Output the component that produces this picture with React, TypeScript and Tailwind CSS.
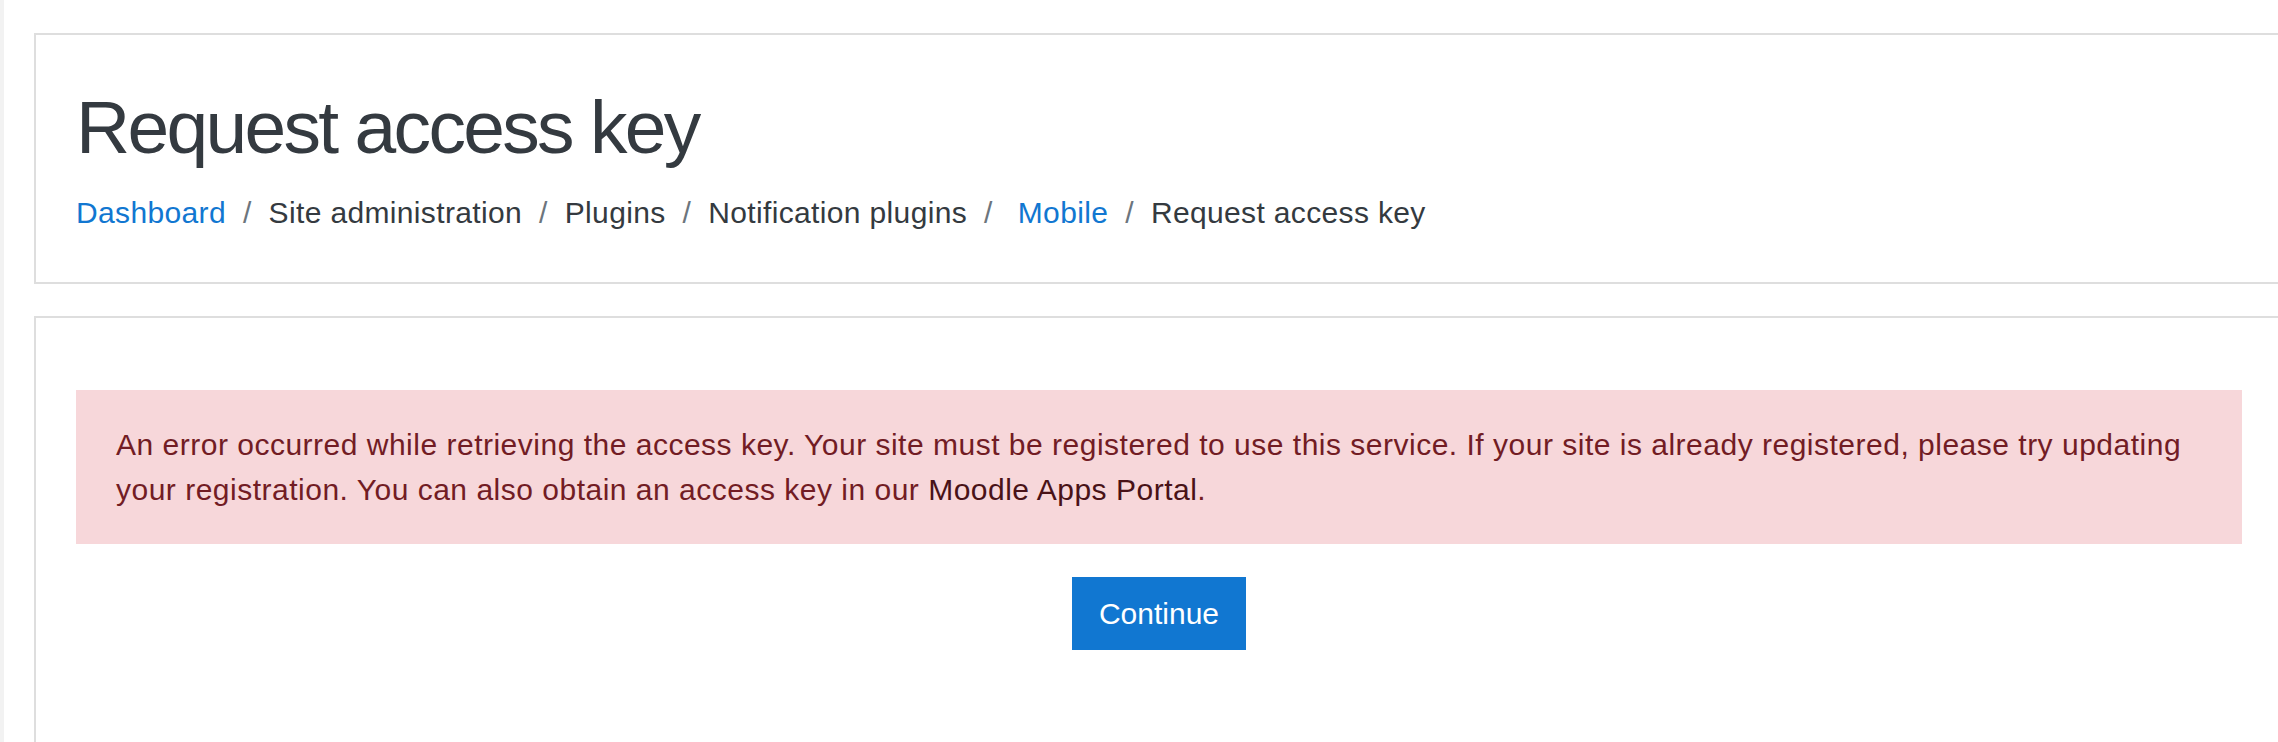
const crumbs = [
  { label: "Dashboard", link: true },
  { label: "Site administration" },
  { label: "Plugins" },
  { label: "Notification plugins" },
  { label: "Mobile", link: true, spaced: true },
  { label: "Request access key" },
];

function Breadcrumb() {
  return (
    <nav aria-label="Navigation bar">
      <ol className="flex items-center text-[30px] leading-[45px] tracking-[0.35px] text-[#343a40]">
        {crumbs.map((c, i) => (
          <li key={c.label} className="flex items-center">
            {i > 0 && <span className="mx-[17px] text-[#6c757d]">/</span>}
            {c.link ? (
              <a href="#" className={`text-[#1177d1] ${c.spaced ? "ml-[8px]" : ""}`}>
                {c.label}
              </a>
            ) : (
              <span>{c.label}</span>
            )}
          </li>
        ))}
      </ol>
    </nav>
  );
}

export default function App() {
  return (
    <div
      className="flex h-[742px] w-full overflow-hidden bg-white"
      style={{ fontFamily: '"Liberation Sans", Arial, sans-serif' }}
    >
      {/* drawer edge */}
      <div className="w-[4px] shrink-0 bg-[#f2f2f2]" />

      <div className="flex shrink-0 flex-col gap-[32px] pl-[30px] pt-[33px]">
        {/* Page header */}
        <header className="w-[2260px] border-2 border-[#dedede] px-[40px] pb-[47px] pt-[47px]">
          <h1 className="text-[75px] leading-[90px] tracking-[-2.7px] text-[#343a40]">
            Request access key
          </h1>
          <div className="mt-[18px]">
            <Breadcrumb />
          </div>
        </header>

        {/* Main region */}
        <main className="min-h-[600px] w-[2260px] border-2 border-[#dedede] px-[40px] pt-[72px]">
          <div className="w-[2166px] bg-[#f7d7da] px-[40px] py-[32px] text-[30px] leading-[45px] tracking-[0.5px] text-[#721c24]">
            <p>
              An error occurred while retrieving the access key. Your site must be registered to use this
              service. If your site is already registered, please try updating your registration. You can
              also obtain an access key in our{" "}
              <a href="#" className="text-[#491217]">
                Moodle Apps Portal
              </a>
              .
            </p>
          </div>
          <div className="mt-[33px] flex w-[2166px] justify-center">
            <button
              type="button"
              className="h-[73px] bg-[#1177d1] px-[27px] text-[30px] leading-[45px] text-white"
            >
              Continue
            </button>
          </div>
        </main>
      </div>
    </div>
  );
}
